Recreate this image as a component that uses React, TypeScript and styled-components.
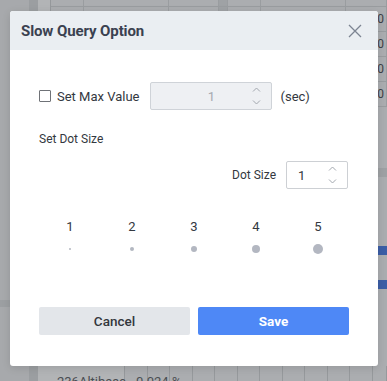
import React from 'react';
import styled, { createGlobalStyle } from 'styled-components';

const Global = createGlobalStyle`
  html, body { margin: 0; padding: 0; }
  body {
    font-family: Roboto, "Liberation Sans", Arial, sans-serif;
    background: #a9abae;
    overflow: hidden;
  }
`;

/* ---------- dimmed application behind the dialog ---------- */

const Page = styled.div`
  position: relative;
  width: 387px;
  height: 381px;
  overflow: hidden;
`;

const Backdrop = styled.div`
  display: grid;
  grid-template-columns: 29px 9px minmax(0, 1fr);
  grid-template-rows: 1fr 15px;
  width: 100%;
  height: 100%;
  background: #a9abae;
`;

const SidePane = styled.div`
  grid-row: 1 / 3;
  grid-column: 1;
  display: flex;
  flex-direction: column;
  background: #a7a9ac;
`;

const SideBand = styled.div<{ $top: number }>`
  margin-top: ${(p) => p.$top}px;
  height: 7px;
  background: #9c9fa2;
`;

const Splitter = styled.div`
  grid-row: 1 / 3;
  grid-column: 2;
  background: #9b9ea1;
`;

const MainArea = styled.div`
  grid-row: 1;
  grid-column: 3;
  display: flex;
  min-width: 0;
`;

const Gutter = styled.div`
  width: 12px;
  flex-shrink: 0;
  background: #b2b4b6;
`;

const TablePane = styled.div`
  flex: 1;
  min-width: 0;
  display: flex;
  flex-direction: column;
  border-left: 1px solid #95989b;
  background: #abadb0;
`;

const TableRow = styled.div<{ $h: number }>`
  height: ${(p) => p.$h}px;
  display: grid;
  grid-template-columns: 33px 85px 50px 9px 33px 85px minmax(0, 1fr);
  border-bottom: 1px solid #999c9f;
  flex-shrink: 0;
`;

const TableCell = styled.div<{ $dark?: boolean }>`
  border-right: 1px solid #9a9da0;
  background: ${(p) => (p.$dark ? '#9fa2a5' : 'transparent')};
  font-size: 12px;
  color: #3d4045;
  display: flex;
  align-items: center;
  justify-content: flex-end;
`;

const ValueText = styled.span`
  margin-right: 2px;
`;

const Spacer = styled.div<{ $h: number }>`
  height: ${(p) => p.$h}px;
  flex-shrink: 0;
`;

const GrayBand = styled.div`
  height: 9px;
  background: #9ea1a4;
  flex-shrink: 0;
`;

const BarRow = styled.div`
  height: 9px;
  display: flex;
  justify-content: flex-end;
  flex-shrink: 0;
`;

const Bar = styled.div`
  width: 12px;
  background: #3b5ea6;
`;

const BottomRow = styled.div`
  grid-row: 2;
  grid-column: 3;
  min-width: 0;
  display: grid;
  grid-template-columns: 87px repeat(11, 22.5px) minmax(0, 1fr);
  background: #abadb0;
`;

const BottomCell = styled.div<{ $light?: boolean; $pad?: number }>`
  border-right: 1px solid #96999c;
  background: ${(p) => (p.$light ? '#b2b4b6' : 'transparent')};
  font-size: 13px;
  color: #4a4d52;
  padding-top: 8px;
  padding-left: ${(p) => p.$pad ?? 0}px;
  white-space: nowrap;
  overflow: visible;
`;

/* ---------- dialog ---------- */

const Modal = styled.div`
  position: absolute;
  left: 10px;
  top: 11px;
  width: 368px;
  height: 355px;
  background: #ffffff;
  border-radius: 3px;
  overflow: hidden;
  display: flex;
  flex-direction: column;
  box-shadow: 0 2px 8px rgba(0, 0, 0, 0.12);
`;

const Header = styled.div`
  height: 39px;
  flex-shrink: 0;
  background: #eaeef2;
  display: flex;
  align-items: center;
  justify-content: space-between;
  padding: 0 16px 0 11px;
`;

const Title = styled.h2`
  margin: 0;
  font-size: 15px;
  font-weight: 700;
  color: #3a4150;
  letter-spacing: -0.1px;
`;

const CloseButton = styled.button`
  width: 14px;
  height: 14px;
  padding: 0;
  border: 0;
  background: transparent;
  display: flex;
  align-items: center;
  justify-content: center;
  cursor: pointer;
`;

const Body = styled.div`
  flex: 1;
  display: flex;
  flex-direction: column;
  padding: 32px 29px 31px;
`;

const MaxRow = styled.div`
  height: 28px;
  display: flex;
  align-items: center;
`;

const CheckLabel = styled.label`
  display: flex;
  align-items: center;
  font-size: 13px;
  color: #333840;
`;

const CheckBox = styled.span`
  width: 12px;
  height: 12px;
  box-sizing: border-box;
  border: 1px solid #6f7277;
  border-radius: 1px;
  background: #fff;
  margin-right: 6px;
`;

const NumberBox = styled.div<{ $disabled?: boolean; $w: number }>`
  position: relative;
  box-sizing: border-box;
  width: ${(p) => p.$w}px;
  height: 28px;
  border: 1px solid ${(p) => (p.$disabled ? '#cfd3d8' : '#cdd0d4')};
  border-radius: 2px;
  background: ${(p) => (p.$disabled ? '#eef0f3' : '#ffffff')};
  display: flex;
  align-items: center;
  font-size: 13px;
  color: ${(p) => (p.$disabled ? '#a5a9b0' : '#333840')};
`;

const NumberValue = styled.span<{ $center?: boolean }>`
  flex: 1;
  text-align: ${(p) => (p.$center ? 'center' : 'left')};
  padding-left: ${(p) => (p.$center ? '0' : '11px')};
`;

const Spin = styled.div<{ $right: number }>`
  position: absolute;
  right: ${(p) => p.$right}px;
  top: 4px;
  bottom: 4px;
  width: 9px;
  display: flex;
  flex-direction: column;
  justify-content: space-between;
  align-items: center;
`;

const MaxInputWrap = styled.div`
  margin-left: 11px;
`;

const Unit = styled.span`
  margin-left: 8px;
  font-size: 13px;
  color: #333840;
`;

const SectionLabel = styled.div`
  margin-top: 21px;
  height: 16px;
  line-height: 16px;
  font-size: 12px;
  color: #333840;
`;

const DotSizeRow = styled.div`
  margin-top: 14px;
  height: 28px;
  display: flex;
  align-items: center;
  justify-content: flex-end;
  padding-right: 1px;
`;

const DotSizeLabel = styled.span`
  font-size: 12px;
  color: #333840;
  margin-right: 10px;
`;

const ScaleGrid = styled.div<{ $mt: number; $h: number }>`
  margin-top: ${(p) => p.$mt}px;
  height: ${(p) => p.$h}px;
  display: grid;
  grid-template-columns: repeat(5, 1fr);
  align-items: center;
  justify-items: center;
`;

const ScaleNum = styled.span`
  font-size: 13px;
  line-height: 16px;
  color: #333840;
`;

const Dot = styled.span<{ $size: number }>`
  width: ${(p) => p.$size}px;
  height: ${(p) => p.$size}px;
  border-radius: 50%;
  background: #b3b7c1;
`;

const ButtonRow = styled.div`
  margin-top: 53px;
  display: grid;
  grid-template-columns: 1fr 1fr;
  gap: 8px;
`;

const Button = styled.button<{ $primary?: boolean }>`
  height: 28px;
  border: 0;
  border-radius: 2px;
  font-family: inherit;
  font-size: 13.5px;
  font-weight: ${(p) => (p.$primary ? 700 : 500)};
  color: ${(p) => (p.$primary ? '#ffffff' : '#33373d')};
  background: ${(p) => (p.$primary ? '#4e88f6' : '#e3e6ea')};
  cursor: pointer;
`;

const Chevron = ({ up }: { up?: boolean }) => (
  <svg width="9" height="5" viewBox="0 0 9 5">
    <path
      d={up ? 'M1 4.5 L4.5 1 L8 4.5' : 'M1 0.5 L4.5 4 L8 0.5'}
      fill="none"
      stroke="#a2a7ae"
      strokeWidth="1"
    />
  </svg>
);

const Spinner = ({ right }: { right: number }) => (
  <Spin $right={right}>
    <Chevron up />
    <Chevron />
  </Spin>
);

const rows = [24, 24, 24, 24];

export default function App() {
  return (
    <>
      <Global />
      <Page>
        <Backdrop>
          <SidePane>
            <SideBand $top={300} />
          </SidePane>
          <Splitter />
          <MainArea>
            <Gutter />
            <TablePane>
              <TableRow $h={6}>
                <TableCell />
                <TableCell />
                <TableCell />
                <TableCell $dark />
                <TableCell />
                <TableCell />
                <TableCell />
              </TableRow>
              {rows.map((h, i) => (
                <TableRow key={i} $h={h}>
                  <TableCell />
                  <TableCell />
                  <TableCell />
                  <TableCell $dark />
                  <TableCell />
                  <TableCell />
                  <TableCell>
                    <ValueText>0</ValueText>
                  </TableCell>
                </TableRow>
              ))}
              <Spacer $h={61} />
              <GrayBand />
              <Spacer $h={69} />
              <BarRow>
                <Bar />
              </BarRow>
              <Spacer $h={25} />
              <BarRow>
                <Bar />
              </BarRow>
            </TablePane>
          </MainArea>
          <BottomRow>
            <BottomCell $light $pad={19}>
              236Altibase
            </BottomCell>
            <BottomCell $pad={11}>0.024 %</BottomCell>
            {Array.from({ length: 11 }).map((_, i) => (
              <BottomCell key={i} />
            ))}
          </BottomRow>
        </Backdrop>

        <Modal role="dialog" aria-label="Slow Query Option">
          <Header>
            <Title>Slow Query Option</Title>
            <CloseButton aria-label="Close">
              <svg width="14" height="14" viewBox="0 0 14 14">
                <path d="M1 1 L13 13 M13 1 L1 13" stroke="#7c8492" strokeWidth="1.3" fill="none" />
              </svg>
            </CloseButton>
          </Header>
          <Body>
            <MaxRow>
              <CheckLabel>
                <CheckBox />
                Set Max Value
              </CheckLabel>
              <MaxInputWrap>
                <NumberBox $disabled $w={122}>
                  <NumberValue $center>1</NumberValue>
                  <Spinner right={10} />
                </NumberBox>
              </MaxInputWrap>
              <Unit>(sec)</Unit>
            </MaxRow>
            <SectionLabel>Set Dot Size</SectionLabel>
            <DotSizeRow>
              <DotSizeLabel>Dot Size</DotSizeLabel>
              <NumberBox $w={62}>
                <NumberValue>1</NumberValue>
                <Spinner right={10} />
              </NumberBox>
            </DotSizeRow>
            <ScaleGrid $mt={30} $h={16}>
              {[1, 2, 3, 4, 5].map((n) => (
                <ScaleNum key={n}>{n}</ScaleNum>
              ))}
            </ScaleGrid>
            <ScaleGrid $mt={9} $h={10}>
              {[2, 4, 6, 8, 10].map((s) => (
                <Dot key={s} $size={s} />
              ))}
            </ScaleGrid>
            <ButtonRow>
              <Button>Cancel</Button>
              <Button $primary>Save</Button>
            </ButtonRow>
          </Body>
        </Modal>
      </Page>
    </>
  );
}
